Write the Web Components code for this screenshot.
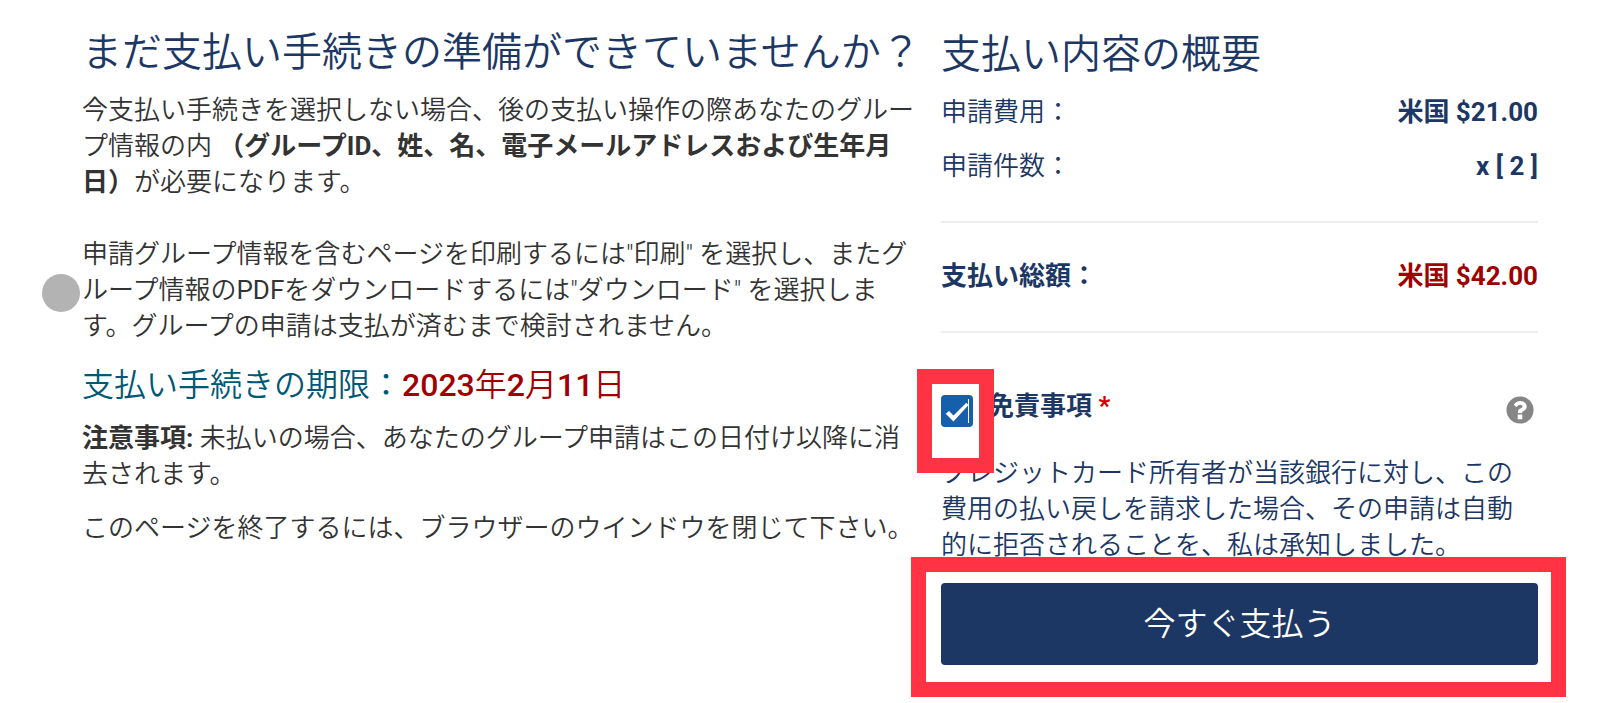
<!DOCTYPE html>
<html lang="ja">
<head>
<meta charset="utf-8">
<meta name="viewport" content="width=device-width, initial-scale=1">
<title>支払い内容の概要</title>
<style>
body { margin: 0; background: #fff; font-family: Roboto, "Noto Sans CJK JP", sans-serif; font-weight: 350; }
</style>
</head>
<body>
<payment-page></payment-page>

<script>
const define = (name, html) => {
  const template = document.createElement('template');
  template.innerHTML = html;
  customElements.define(name, class extends HTMLElement {
    constructor() {
      super();
      this.attachShadow({ mode: 'open' }).append(template.content.cloneNode(true));
    }
  });
};

define('section-title', `
<style>
:host { display: block; }
h2 { margin: 0; font-size: 40px; line-height: 48px; font-weight: 350; color: #1d3764; white-space: nowrap; }
</style>
<h2><slot></slot></h2>`);

define('touch-dot', `
<style>
:host { position: absolute; left: -40px; top: 245px; width: 38px; height: 38px; border-radius: 50%; background: #b3b3b3; }
</style>`);

define('highlight-frame', `
<style>
:host { display: block; position: relative; }
.frame { position: absolute; inset: -26px -28px -32px -30px; border: 15px solid #ff3344; pointer-events: none; }
:host([compact]) .frame { inset: -26px -21px -46px -24px; }
</style>
<slot></slot><div class="frame"></div>`);

define('payment-notice', `
<style>
:host { display: block; position: relative; color: #333; font-size: 26px; line-height: 36px; }
section-title { margin-bottom: 15px; }
p { margin: 0 0 36px; }
b { font-weight: 700; }
.latin { font-weight: 400; }
h3 { margin: -15px 0 15px; font-size: 32px; line-height: 40px; font-weight: 350; color: #005776; }
h3 span { color: #a00000; }
h3 .num { font-weight: 500; }
.note { margin-bottom: 18px; }
.last { margin: 0; white-space: nowrap; }
</style>
<touch-dot></touch-dot>
<section-title>まだ支払い手続きの準備ができていませんか？</section-title>
<p>今支払い手続きを選択しない場合、後の支払い操作の際あなたのグループ情報の内 <b>（グループID、姓、名、電子メールアドレスおよび生年月日）</b>が必要になります。</p>
<p>申請グループ情報を含むページを印刷するには"印刷" を選択し、またグループ情報の<span class="latin">PDF</span>をダウンロードするには"ダウンロード" を選択します。グループの申請は支払が済むまで検討されません。</p>
<h3>支払い手続きの期限：<span><span class="num">2023</span>年<span class="num">2</span>月<span class="num">11</span>日</span></h3>
<p class="note"><b>注意事項:</b> 未払いの場合、あなたのグループ申請はこの日付け以降に消去されます。</p>
<p class="last">このページを終了するには、ブラウザーのウインドウを閉じて下さい。</p>`);

define('amount-row', `
<style>
:host { display: flex; justify-content: space-between; font-size: 26px; line-height: 36px; color: #1d3764; }
:host([total]) { font-weight: 700; padding: 35px 0 37px; border: solid #eee; border-width: 2px 0; }
.value { font-weight: 700; }
:host([total]) .value { color: #a00000; }
</style>
<span><slot name="label"></slot></span><span class="value"><slot></slot></span>`);

define('disclaimer-check', `
<style>
:host { display: block; font-size: 26px; line-height: 36px; color: #1d3764; }
.row { display: flex; align-items: flex-start; }
.box { position: relative; width: 32px; height: 32px; }
input { appearance: none; display: block; width: 32px; height: 32px; margin: 0; border-radius: 4px; background: #155fab; }
.box svg { position: absolute; inset: 0; pointer-events: none; visibility: hidden; }
input:checked + svg { visibility: visible; }
highlight-frame { z-index: 1; }
label { margin: -7px 0 0 15px; font-weight: 700; }
.required { color: #d40000; }
.help { margin: 1px 4px 0 auto; padding: 0; border: 0; background: none; width: 28px; height: 28px; }
.help svg { display: block; }
p { margin: 28px 0 0; }
</style>
<div class="row">
  <highlight-frame compact><div class="box">
    <input type="checkbox" id="agree" checked>
    <svg width="32" height="32" viewBox="0 0 32 32"><path d="M4.7 18.7 8 16.1l4.500 4.500L25.300 7.800l2.200 2.200L12.500 26.500z" fill="#fff"/><path d="M27.500 4v24" stroke="#fff"/></svg>
  </div></highlight-frame>
  <label for="agree">免責事項 <span class="required">*</span></label>
  <button class="help" type="button" aria-label="ヘルプ"><svg width="28" height="28" viewBox="0 0 512 512"><path fill="#868686" d="M504 256c0 137-111 248-248 248S8 393 8 256 119 8 256 8s248 111 248 248z"/><path fill="#fff" d="M262.700 90c-54.500 0-89.200 23-116.500 63.800-3.500 5.300-2.400 12.400 2.700 16.300l34.700 26.300c5.200 3.900 12.600 3 16.700-2.100 17.900-22.700 30.100-35.800 57.300-35.800 20.400 0 45.700 13.100 45.700 33 0 15-12.400 22.700-32.500 34C247 238.500 216 254.900 216 296v4c0 6.600 5.400 12 12 12h56c6.600 0 12-5.400 12-12v-1.300c0-28.500 83.200-29.600 83.200-106.700 0-58-60.200-102-116.500-102zM214 338h84v88h-84z"/></svg></button>
</div>
<p>クレジットカード所有者が当該銀行に対し、この費用の払い戻しを請求した場合、その申請は自動的に拒否されることを、私は承知しました。</p>`);

define('pay-button', `
<style>
:host { display: block; }
button { display: block; width: 100%; padding: 17px 0; border: 0; border-radius: 4px; background: #1d3764; color: #fff; font: 350 32px/48px Roboto, "Noto Sans CJK JP", sans-serif; }
</style>
<button type="button"><slot></slot></button>`);

define('payment-summary', `
<style>
:host { display: block; }
section-title { margin: 2px 0 15px; }
amount-row { margin-bottom: 18px; }
amount-row.count { margin-bottom: 37px; }
amount-row[total] { margin-bottom: 62px; }
disclaimer-check { margin-bottom: 20px; }
</style>
<section-title>支払い内容の概要</section-title>
<amount-row><span slot="label">申請費用：</span>米国 $21.00</amount-row>
<amount-row class="count"><span slot="label">申請件数：</span>x [ 2 ]</amount-row>
<amount-row total><span slot="label">支払い総額：</span>米国 $42.00</amount-row>
<disclaimer-check></disclaimer-check>
<highlight-frame><pay-button>今すぐ支払う</pay-button></highlight-frame>`);

define('payment-page', `
<style>
:host { display: block; }
main { display: grid; grid-template-columns: minmax(0, 835fr) minmax(0, 597fr); gap: 24px; padding: 29px 82px 38px; }
</style>
<main><payment-notice></payment-notice><payment-summary></payment-summary></main>`);
</script>
</body>
</html>
